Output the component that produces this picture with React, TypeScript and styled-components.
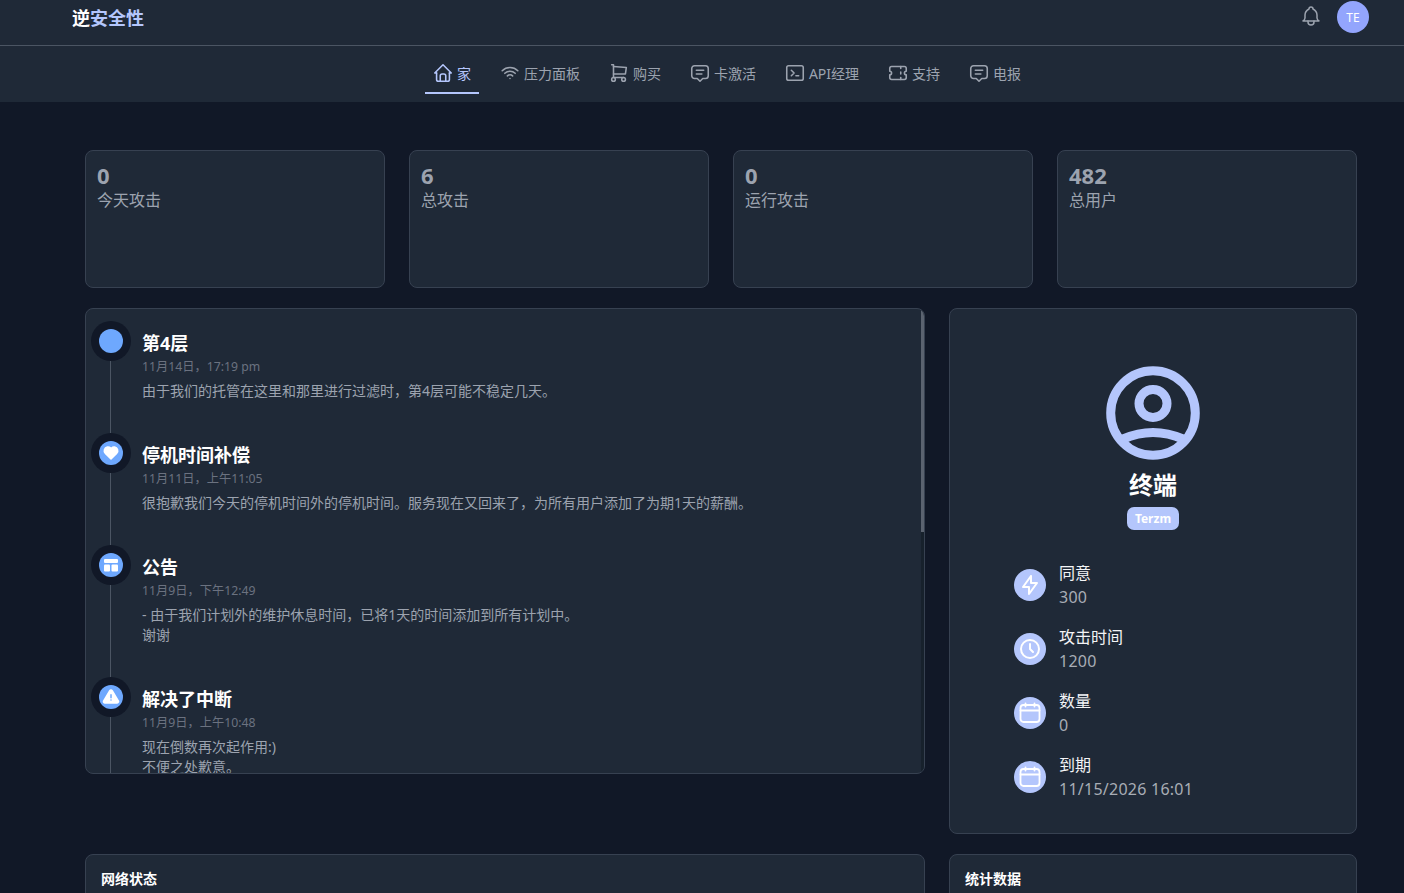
import React from 'react'
import styled, { createGlobalStyle } from 'styled-components'
import { TbAlertTriangleFilled, TbBell, TbBolt, TbClock, TbHeartFilled, TbHome, TbMessage2, TbShoppingCart, TbTerminal2, TbTicket, TbWifi } from 'react-icons/tb'

const palette = {
	page: '#111827',
	card: '#1f2937',
	border: '#374151',
	muted: '#9ca3af',
	faint: '#6b7280',
	accent: '#b4c6fc',
	blue: '#6ea8fe',
}

const GlobalStyle = createGlobalStyle`
	html, body {
		margin: 0;
		height: 100%;
		overflow: hidden;
		background: ${palette.page};
	}
	body {
		font-family: "Noto Sans", "Noto Sans CJK SC", sans-serif;
		color: ${palette.muted};
	}
	#root {
		height: 100vh;
		overflow: hidden;
	}
`

const navItems = [
	{ label: '家', icon: <TbHome />, active: true },
	{ label: '压力面板', icon: <TbWifi /> },
	{ label: '购买', icon: <TbShoppingCart /> },
	{ label: '卡激活', icon: <TbMessage2 /> },
	{ label: 'API经理', icon: <TbTerminal2 /> },
	{ label: '支持', icon: <TbTicket /> },
	{ label: '电报', icon: <TbMessage2 /> },
]

const stats = [
	{ value: '0', label: '今天攻击' },
	{ value: '6', label: '总攻击' },
	{ value: '0', label: '运行攻击' },
	{ value: '482', label: '总用户' },
]

const LayoutGlyph = () => (
	<svg width="16" height="16" viewBox="0 0 16 16" fill="#fff">
		<rect x="1" y="2" width="14" height="4" rx="1" />
		<rect x="1" y="7.5" width="6" height="7" rx="1" />
		<rect x="8.5" y="7.5" width="6.5" height="7" rx="1" />
	</svg>
)

const CalendarGlyph = () => (
	<svg viewBox="0 0 24 24" fill="none" stroke="currentColor" strokeWidth="1.8" strokeLinecap="round">
		<rect x="2.5" y="4" width="19" height="17" rx="3" />
		<path d="M7.5 2.5v3M16.5 2.5v3M2.5 9.5h19" />
	</svg>
)

const events = [
	{ title: '第4层', date: '11月14日，17:19 pm', body: ['由于我们的托管在这里和那里进行过滤时，第4层可能不稳定几天。'], icon: null },
	{ title: '停机时间补偿', date: '11月11日，上午11:05', body: ['很抱歉我们今天的停机时间外的停机时间。服务现在又回来了，为所有用户添加了为期1天的薪酬。'], icon: <TbHeartFilled /> },
	{ title: '公告', date: '11月9日，下午12:49', body: ['- 由于我们计划外的维护休息时间，已将1天的时间添加到所有计划中。', '谢谢'], icon: <LayoutGlyph /> },
	{ title: '解决了中断', date: '11月9日，上午10:48', body: ['现在倒数再次起作用:)', '不便之处歉意。'], icon: <TbAlertTriangleFilled /> },
]

const limits = [
	{ label: '同意', value: '300', icon: <TbBolt /> },
	{ label: '攻击时间', value: '1200', icon: <TbClock /> },
	{ label: '数量', value: '0', icon: <CalendarGlyph /> },
	{ label: '到期', value: '11/15/2026 16:01', icon: <CalendarGlyph /> },
]

const App = () => {
	return (
		<>
			<GlobalStyle />
			<TopBar>
				<Logo>
					逆<span>安全性</span>
				</Logo>
				<TopActions>
					<BellButton>
						<TbBell />
					</BellButton>
					<Avatar>TE</Avatar>
				</TopActions>
			</TopBar>
			<Nav>
				{navItems.map((item, index) => (
					<NavItem key={index} $active={item.active}>
						{item.icon}
						<span>{item.label}</span>
					</NavItem>
				))}
			</Nav>
			<Main>
				<StatGrid>
					{stats.map((item, index) => (
						<StatCard key={index}>
							<StatValue>{item.value}</StatValue>
							<StatLabel>{item.label}</StatLabel>
						</StatCard>
					))}
				</StatGrid>
				<Columns>
					<FeedCard>
						<Feed>
							{events.map((item, index) => (
								<FeedItem key={index}>
									<Marker>
										<MarkerRing>
											<MarkerDot>{item.icon}</MarkerDot>
										</MarkerRing>
										<MarkerLine />
									</Marker>
									<FeedBody>
										<FeedTitle>{item.title}</FeedTitle>
										<FeedDate>{item.date}</FeedDate>
										<FeedText>
											{item.body.map((line, lineIndex) => (
												<div key={lineIndex}>{line}</div>
											))}
										</FeedText>
									</FeedBody>
								</FeedItem>
							))}
						</Feed>
						<ScrollTrack>
							<ScrollThumb />
						</ScrollTrack>
					</FeedCard>
					<ProfileCard>
						<svg width="94" height="94" viewBox="0 0 94 94" fill="none" stroke={palette.accent} strokeWidth="9">
							<circle cx="47" cy="47" r="42.3" />
							<circle cx="47" cy="37.5" r="14" />
							<path d="M17 73 Q47 60 77 73" />
						</svg>
						<ProfileName>终端</ProfileName>
						<PlanBadge>Terzm</PlanBadge>
						<LimitList>
							{limits.map((item, index) => (
								<LimitRow key={index}>
									<LimitIcon>{item.icon}</LimitIcon>
									<div>
										<LimitLabel>{item.label}</LimitLabel>
										<LimitValue>{item.value}</LimitValue>
									</div>
								</LimitRow>
							))}
						</LimitList>
					</ProfileCard>
				</Columns>
				<Columns>
					<BottomCard>网络状态</BottomCard>
					<BottomCard>统计数据</BottomCard>
				</Columns>
			</Main>
		</>
	)
}

const TopBar = styled.header`
	height: 45px;
	background: ${palette.card};
	border-bottom: 1px solid #4b5563;
	display: flex;
	justify-content: space-between;
	padding: 0 35px 0 72px;
`
const Logo = styled.div`
	font-size: 18px;
	font-weight: 700;
	line-height: 36px;
	color: #fff;
	& > span {
		color: ${palette.accent};
	}
`
const TopActions = styled.div`
	display: flex;
	align-items: flex-start;
	gap: 14px;
	padding-top: 1px;
`
const BellButton = styled.div`
	display: flex;
	padding-top: 3px;
	color: ${palette.muted};
	font-size: 24px;
	& > svg {
		stroke-width: 1.5;
	}
`
const Avatar = styled.div`
	width: 32px;
	height: 32px;
	border-radius: 100%;
	background: #93a5fd;
	color: #fff;
	font-size: 12px;
	display: flex;
	align-items: center;
	justify-content: center;
`
const Nav = styled.nav`
	height: 56px;
	box-sizing: border-box;
	background: ${palette.card};
	display: flex;
	justify-content: center;
	gap: 13px;
	padding-left: 50px;
`
const NavItem = styled.a<{ $active?: boolean }>`
	display: flex;
	align-items: center;
	gap: 3px;
	height: 48px;
	box-sizing: border-box;
	padding: 8px 8px 0 7px;
	font-size: 14px;
	color: ${({ $active }) => ($active ? palette.accent : palette.muted)};
	border-bottom: 2px solid ${({ $active }) => ($active ? palette.accent : 'transparent')};
	& > svg {
		font-size: 22px;
		stroke-width: 1.7;
	}
`
const Main = styled.main`
	padding: 48px 47px 0 85px;
	display: flex;
	flex-direction: column;
	gap: 20px;
`
const StatGrid = styled.div`
	display: grid;
	grid-template-columns: repeat(4, 1fr);
	gap: 24px;
`
const Card = styled.div`
	background: ${palette.card};
	border: 1px solid ${palette.border};
	border-radius: 8px;
	box-sizing: border-box;
`
const StatCard = styled(Card)`
	height: 138px;
	padding: 12px 11px;
`
const StatValue = styled.div`
	font-size: 22px;
	font-weight: 700;
	line-height: 24px;
	color: ${palette.muted};
`
const StatLabel = styled.div`
	margin-top: 1px;
	font-size: 16px;
	line-height: 24px;
`
const Columns = styled.div`
	display: grid;
	grid-template-columns: 840px 408px;
	gap: 24px;
	align-items: start;
`
const FeedCard = styled(Card)`
	height: 466px;
	overflow: hidden;
	position: relative;
`
const Feed = styled.div`
	height: 464px;
	overflow: hidden;
	padding: 12px 0 0 5px;
	box-sizing: border-box;
`
const ScrollTrack = styled.div`
	position: absolute;
	top: 0;
	right: 0;
	bottom: 0;
	width: 3px;
	background: #17212c;
`
const ScrollThumb = styled.div`
	height: 223px;
	background: #5b6370;
`
const FeedItem = styled.div`
	display: flex;
	gap: 11px;
`
const Marker = styled.div`
	width: 40px;
	display: flex;
	flex-direction: column;
	align-items: center;
	flex-shrink: 0;
`
const MarkerRing = styled.div`
	width: 40px;
	height: 40px;
	flex-shrink: 0;
	border-radius: 100%;
	background: ${palette.page};
	display: flex;
	align-items: center;
	justify-content: center;
`
const MarkerDot = styled.div`
	width: 24px;
	height: 24px;
	border-radius: 100%;
	background: ${palette.blue};
	color: #fff;
	font-size: 18px;
	display: flex;
	align-items: center;
	justify-content: center;
`
const MarkerLine = styled.div`
	flex: 1;
	width: 1px;
	margin-right: 1px;
	background: #4b5563;
`
const FeedBody = styled.div`
	padding: 8px 0 32px;
`
const FeedTitle = styled.div`
	font-size: 18px;
	font-weight: 700;
	line-height: 28px;
	color: #fff;
`
const FeedDate = styled.div`
	font-size: 12.25px;
	line-height: 20px;
	color: ${palette.faint};
`
const FeedText = styled.div`
	font-size: 14px;
	line-height: 20px;
	margin-top: 4px;
	color: ${palette.muted};
`
const ProfileCard = styled(Card)`
	height: 526px;
	padding-top: 57px;
	display: flex;
	flex-direction: column;
	align-items: center;
`
const ProfileName = styled.div`
	margin-top: 9px;
	font-size: 24px;
	font-weight: 700;
	line-height: 32px;
	color: #fff;
`
const PlanBadge = styled.div`
	margin-top: 6px;
	padding: 0 8px;
	height: 23px;
	line-height: 23px;
	border-radius: 7px;
	background: ${palette.accent};
	color: #fff;
	font-size: 12px;
	font-weight: 700;
`
const LimitList = styled.div`
	align-self: stretch;
	margin-top: 31px;
	padding-left: 64px;
	display: flex;
	flex-direction: column;
	gap: 16px;
`
const LimitRow = styled.div`
	display: flex;
	align-items: center;
	gap: 13px;
`
const LimitIcon = styled.div`
	width: 32px;
	height: 32px;
	border-radius: 100%;
	background: ${palette.accent};
	color: #fff;
	display: flex;
	align-items: center;
	justify-content: center;
	font-size: 24px;
	& > svg {
		width: 24px;
		height: 24px;
	}
`
const LimitLabel = styled.div`
	font-size: 16px;
	line-height: 24px;
	color: #f3f4f6;
`
const LimitValue = styled.div`
	font-size: 16px;
	line-height: 24px;
	letter-spacing: 0.25px;
	color: #a8adb5;
`
const BottomCard = styled(Card)`
	height: 200px;
	padding: 14px 15px;
	font-size: 14px;
	font-weight: 700;
	line-height: 20px;
	color: #fff;
`

export default App
